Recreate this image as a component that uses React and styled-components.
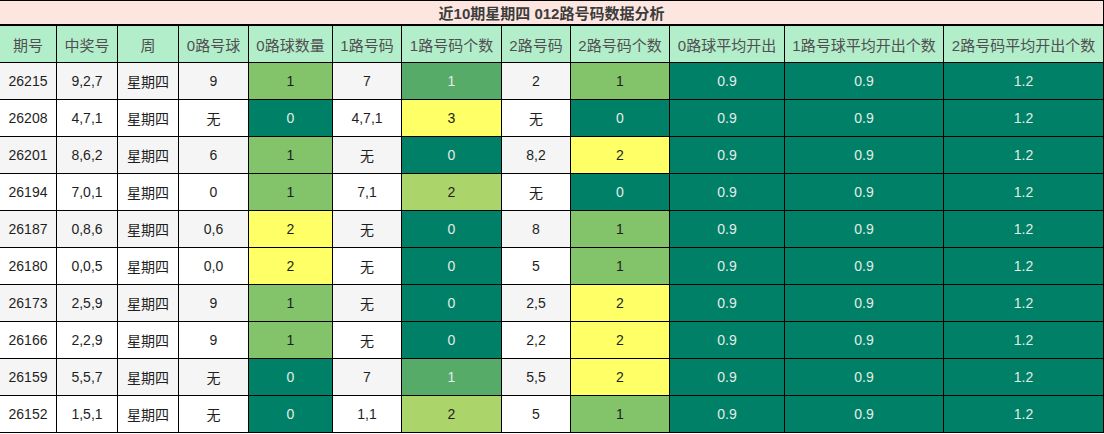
import React from "react";
import styled, { createGlobalStyle } from "styled-components";

const Global = createGlobalStyle`
  html, body { margin: 0; padding: 0; background: #fff; }
  body { font-family: "Liberation Sans", "Noto Sans CJK SC", sans-serif; }
`;

const COLS = [57, 61, 61, 70, 84, 69, 100, 69, 99, 115, 159, 160];

const BG = {
  dark: "#008066",
  mid: "#56ab69",
  light: "#83c36a",
  lime: "#abd56a",
  yellow: "#ffff66",
};

const Wrap = styled.div`
  width: 1104px;
  border-top: 1px solid #000;
`;

const Title = styled.div`
  height: 23px;
  background: #fde6e0;
  border-bottom: 2px solid #000;
  border-right: 1px solid #000;
  display: flex;
  align-items: center;
  justify-content: center;
  font-weight: bold;
  font-size: 15px;
  color: #3c3c3c;
`;

const Row = styled.div`
  display: grid;
  grid-template-columns: ${COLS.map((c) => c + "px").join(" ")};
  height: 37px;
  background: ${(p) => (p.$alt ? "#f5f5f5" : "#ffffff")};
`;

const HeadRow = styled(Row)`
  background: #b3eecb;
`;

const Cell = styled.div`
  box-sizing: border-box;
  border-right: 1px solid #000;
  border-bottom: 1px solid #000;
  display: flex;
  align-items: center;
  justify-content: center;
  font-size: 14px;
  color: ${(p) => (p.$tone === "dark" || p.$tone === "mid" ? "#e4ece8" : "#1e1e1e")};
  background: ${(p) => (p.$tone ? BG[p.$tone] : "transparent")};
  white-space: nowrap;
`;

const HeadCell = styled(Cell)`
  font-size: 15px;
  color: #505050;
`;

const HEAD = [
  "期号", "中奖号", "周", "0路号球", "0路球数量", "1路号码", "1路号码个数",
  "2路号码", "2路号码个数", "0路球平均开出", "1路号球平均开出个数", "2路号码平均开出个数",
];

const DATA = [
  ["26215", "9,2,7", "9", ["1", "light"], "7", ["1", "mid"], "2", ["1", "light"]],
  ["26208", "4,7,1", "无", ["0", "dark"], "4,7,1", ["3", "yellow"], "无", ["0", "dark"]],
  ["26201", "8,6,2", "6", ["1", "light"], "无", ["0", "dark"], "8,2", ["2", "yellow"]],
  ["26194", "7,0,1", "0", ["1", "light"], "7,1", ["2", "lime"], "无", ["0", "dark"]],
  ["26187", "0,8,6", "0,6", ["2", "yellow"], "无", ["0", "dark"], "8", ["1", "light"]],
  ["26180", "0,0,5", "0,0", ["2", "yellow"], "无", ["0", "dark"], "5", ["1", "light"]],
  ["26173", "2,5,9", "9", ["1", "light"], "无", ["0", "dark"], "2,5", ["2", "yellow"]],
  ["26166", "2,2,9", "9", ["1", "light"], "无", ["0", "dark"], "2,2", ["2", "yellow"]],
  ["26159", "5,5,7", "无", ["0", "dark"], "7", ["1", "mid"], "5,5", ["2", "yellow"]],
  ["26152", "1,5,1", "无", ["0", "dark"], "1,1", ["2", "lime"], "5", ["1", "light"]],
];

export default function App() {
  return (
    <>
      <Global />
      <Wrap>
        <Title>近10期星期四 012路号码数据分析</Title>
        <HeadRow>
          {HEAD.map((h) => (
            <HeadCell key={h}>{h}</HeadCell>
          ))}
        </HeadRow>
        {DATA.map((r, i) => (
          <Row key={r[0]} $alt={i % 2 === 0}>
            <Cell>{r[0]}</Cell>
            <Cell>{r[1]}</Cell>
            <Cell>星期四</Cell>
            <Cell>{r[2]}</Cell>
            <Cell $tone={r[3][1]}>{r[3][0]}</Cell>
            <Cell>{r[4]}</Cell>
            <Cell $tone={r[5][1]}>{r[5][0]}</Cell>
            <Cell>{r[6]}</Cell>
            <Cell $tone={r[7][1]}>{r[7][0]}</Cell>
            <Cell $tone="dark">0.9</Cell>
            <Cell $tone="dark">0.9</Cell>
            <Cell $tone="dark">1.2</Cell>
          </Row>
        ))}
      </Wrap>
    </>
  );
}
